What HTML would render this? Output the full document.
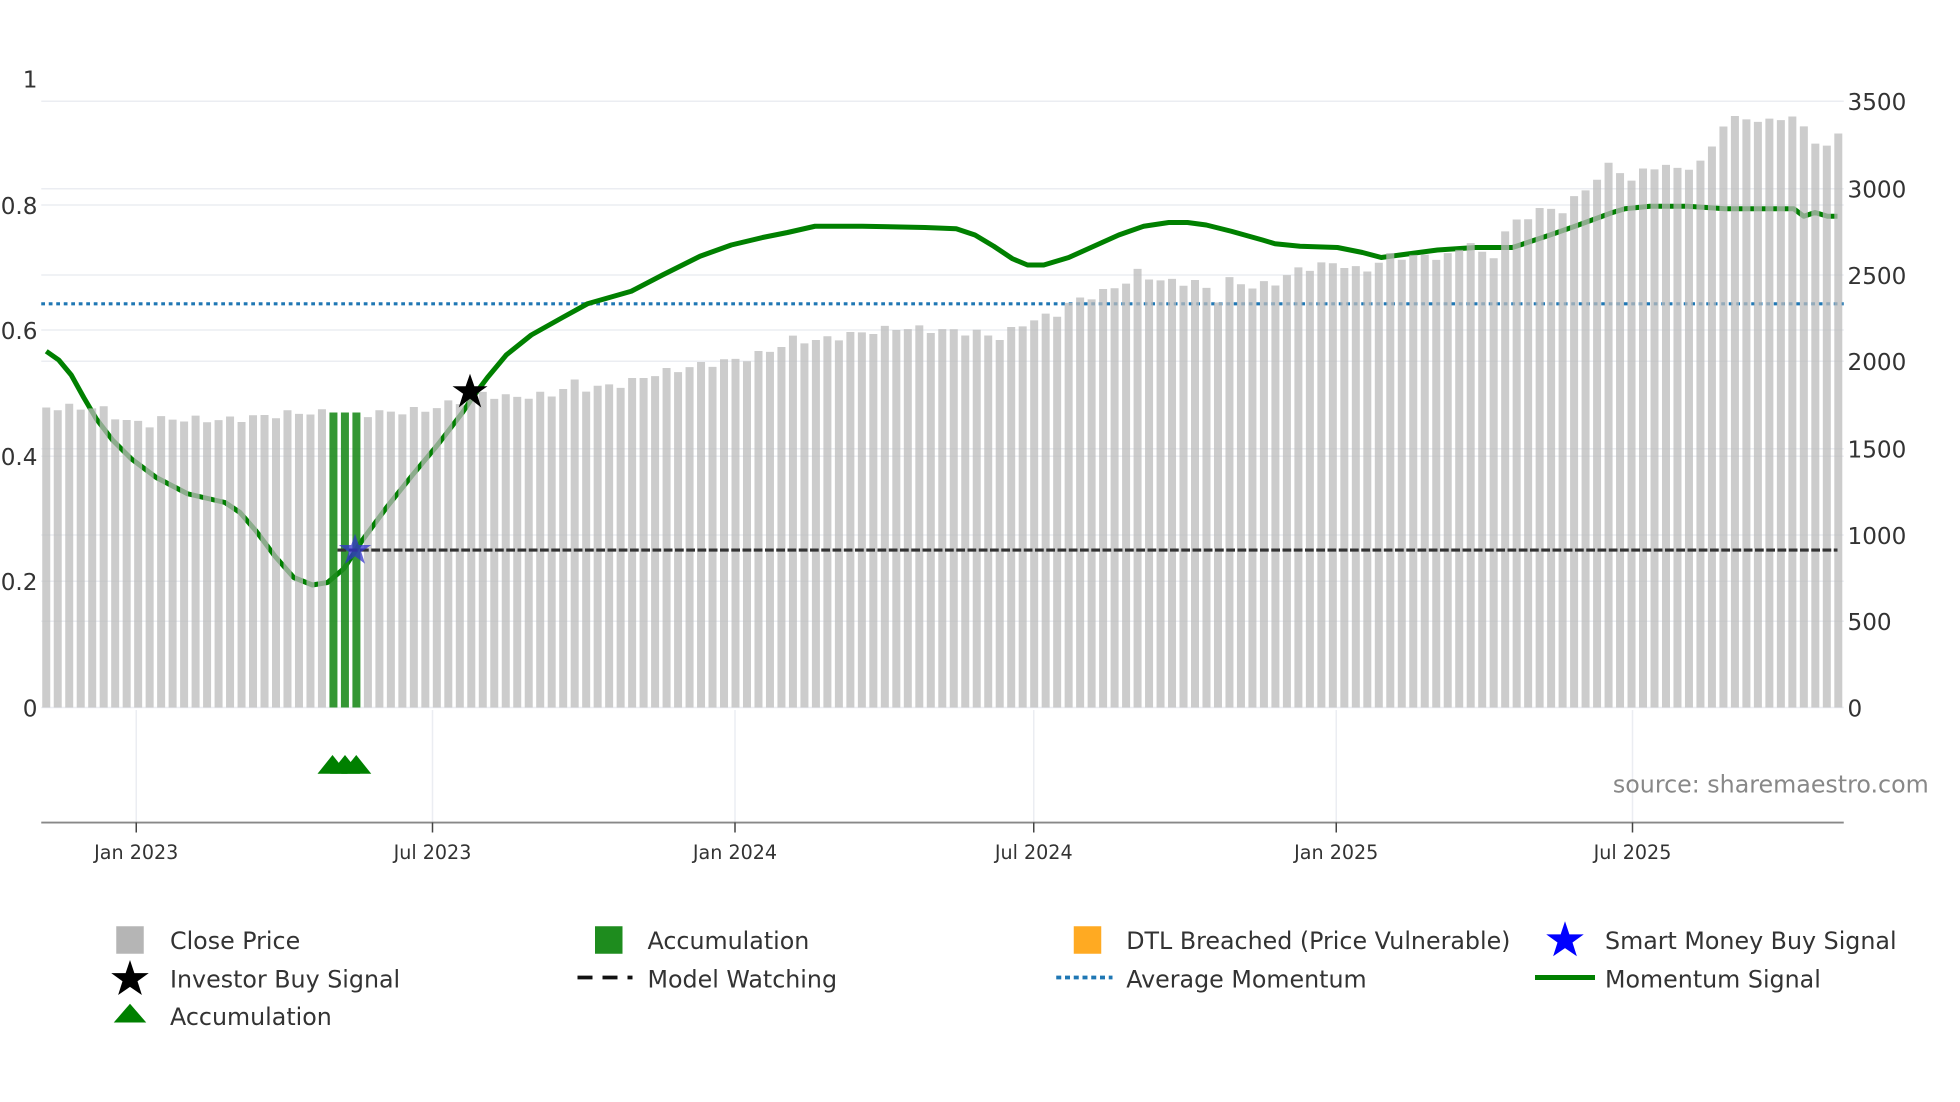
<!DOCTYPE html>
<html><head><meta charset="utf-8"><style>
html,body{margin:0;padding:0;background:#fff;width:1960px;height:1102px;overflow:hidden}
svg{display:block}
text{font-family:"DejaVu Sans","Liberation Sans",sans-serif}
</style></head><body>
<svg id="s" width="1960" height="1102" viewBox="0 0 1568 881.6" xmlns="http://www.w3.org/2000/svg">
<g stroke="#ebedf2" stroke-width="1.2">
<line x1="33" x2="1475" y1="81" y2="81"/><line x1="33" x2="1475" y1="151" y2="151"/><line x1="33" x2="1475" y1="164" y2="164"/>
<line x1="33" x2="1475" y1="220" y2="220"/><line x1="33" x2="1475" y1="264" y2="264"/><line x1="33" x2="1475" y1="289" y2="289"/>
<line x1="33" x2="1475" y1="359" y2="359"/><line x1="33" x2="1475" y1="365" y2="365"/><line x1="33" x2="1475" y1="428" y2="428"/>
<line x1="33" x2="1475" y1="465" y2="465"/><line x1="33" x2="1475" y1="497" y2="497"/><line x1="33" x2="1475" y1="566" y2="566"/>
<line x1="109" x2="109" y1="568" y2="658"/><line x1="346" x2="346" y1="568" y2="658"/><line x1="588" x2="588" y1="568" y2="658"/>
<line x1="827" x2="827" y1="568" y2="658"/><line x1="1069" x2="1069" y1="568" y2="658"/><line x1="1306" x2="1306" y1="568" y2="658"/>
</g>
<line x1="33" x2="1475" y1="243" y2="243" stroke="#1f77b4" stroke-width="2.5" stroke-dasharray="3,3"/>
<polyline id="mom" fill="none" stroke="#008000" stroke-width="4" stroke-linejoin="round" points="37,281 47,288 57,300 67,318 77,335 90,352 105,367 125,382 150,395 180,402 192,410 205,425 220,445 235,462 250,468 262,466 275,455 290,432 310,405 330,380 350,356 370,330 378,318 390,302 405,284 425,268 450,254 470,243 505,233 530,220 560,205 585,196 610,190 630,186 652,181 690,181 740,182 765,183 780,188 795,197 810,207 822,212 835,212 855,206 875,197 895,188 915,181 935,178 950,178 965,180 985,185 1010,192 1020,195 1040,197 1070,198 1090,202 1105,206 1120,204 1150,200 1180,198 1210,198 1240,188 1260,181 1290,170 1300,167 1320,165 1350,165 1380,167 1435,167 1443,173 1452,170 1462,173 1470,173"/>
<g id="bars"></g>
<line x1="270" x2="1470" y1="440" y2="440" stroke="#333" stroke-width="2.5" stroke-dasharray="7,2"/>
<polygon points="376,299 379.5,309 390,309 381.5,315 385,326 376,319 367,326 370.5,315 362,309 372.5,309" fill="#000"/>
<polygon points="284,427 287,436 297,436 289,441.5 292,451 284,445 276,451 279,441.5 271,436 281,436" fill="#3333cc" opacity="0.75"/>
<g fill="#008000"><polygon points="254,619 266,604 278,619"/><polygon points="264,619 276,604 288,619"/><polygon points="273,619 285,604 297,619"/></g>
<line x1="33" x2="1475" y1="658" y2="658" stroke="#888" stroke-width="1.5"/>
<g stroke="#444" stroke-width="1.2"><line x1="109" x2="109" y1="658" y2="666"/><line x1="346" x2="346" y1="658" y2="666"/><line x1="588" x2="588" y1="658" y2="666"/><line x1="827" x2="827" y1="658" y2="666"/><line x1="1069" x2="1069" y1="658" y2="666"/><line x1="1306" x2="1306" y1="658" y2="666"/></g>
<g font-size="15.3" fill="#333" text-anchor="middle">
<text x="109" y="687">Jan 2023</text><text x="346" y="687">Jul 2023</text><text x="588" y="687">Jan 2024</text>
<text x="827" y="687">Jul 2024</text><text x="1069" y="687">Jan 2025</text><text x="1306" y="687">Jul 2025</text></g>
<g font-size="18.5" fill="#333" text-anchor="end">
<text x="30" y="70">1</text><text x="30" y="171">0.8</text><text x="30" y="271">0.6</text><text x="30" y="372">0.4</text><text x="30" y="472">0.2</text><text x="30" y="573">0</text></g>
<g font-size="18.5" fill="#333">
<text x="1478" y="88">3500</text><text x="1478" y="158">3000</text><text x="1478" y="227">2500</text><text x="1478" y="296">2000</text>
<text x="1478" y="366">1500</text><text x="1478" y="435">1000</text><text x="1478" y="504">500</text><text x="1478" y="573">0</text></g>
<text x="1543" y="634" font-size="19" fill="#888" text-anchor="end">source: sharemaestro.com</text>
<g font-size="19" fill="#333">
<rect x="93" y="741" width="22" height="22" fill="#b5b5b5"/><text x="136" y="759">Close Price</text>
<rect x="476" y="741" width="22" height="22" fill="#1e8c1e"/><text x="518" y="759">Accumulation</text>
<rect x="859" y="741" width="22" height="22" fill="#ffaa22"/><text x="901" y="759">DTL Breached (Price Vulnerable)</text>
<polygon points="1252,737 1255.5,747.5 1267,747.5 1258,754 1261.5,765 1252,758.5 1242.5,765 1246,754 1237,747.5 1248.5,747.5" fill="#0000ff"/><text x="1284" y="759">Smart Money Buy Signal</text>
<polygon points="104,768 107.5,778.5 119,778.5 110,785 113.5,796 104,789.5 94.5,796 98,785 89,778.5 100.5,778.5" fill="#000"/><text x="136" y="790">Investor Buy Signal</text>
<line x1="462" x2="506" y1="782" y2="782" stroke="#111" stroke-width="3" stroke-dasharray="12,8"/><text x="518" y="790">Model Watching</text>
<line x1="845" x2="890" y1="782" y2="782" stroke="#1f77b4" stroke-width="3" stroke-dasharray="4,3"/><text x="901" y="790">Average Momentum</text>
<line x1="1228" x2="1276" y1="782" y2="782" stroke="#008000" stroke-width="4"/><text x="1284" y="790">Momentum Signal</text>
<polygon points="91,818 104,803 117,818" fill="#008000"/><text x="136" y="820">Accumulation</text>
</g>
</svg>
<script>
var k=[[37,326],[80,326],[100,337],[120,339],[130,335],[180,336],[240,330],[290,331],[340,328],[370,320],[390,314],[400,318],[440,316],[460,306],[470,311],[500,307],[520,300],[560,292],[600,286],[620,279],[635,271],[650,273],[690,266],[720,262],[780,266],[800,270],[820,258],[845,251],[860,240],[880,235],[900,226],[910,218],[930,225],[960,226],[975,240],[985,222],[1000,230],[1020,226],[1040,215],[1070,210],[1090,218],[1110,205],[1160,205],[1180,190],[1190,215],[1205,183],[1230,168],[1250,168],[1270,150],[1290,130],[1305,145],[1320,132],[1340,135],[1360,132],[1380,98],[1400,92],[1410,102],[1420,92],[1440,97],[1450,110],[1460,122],[1470,105]];
function f(x){for(var i=0;i<k.length-1;i++){if(x<=k[i+1][0]){var t=(x-k[i][0])/(k[i+1][0]-k[i][0]);return k[i][1]+t*(k[i+1][1]-k[i][1]);}}return k[k.length-1][1];}
var g=document.getElementById('bars'),h='';
for(var i=0;i<157;i++){var x=37+i*9.19;var y=f(x)+(Math.sin(i*2.3)*3);var acc=(Math.abs(x-266)<4.5||Math.abs(x-276)<4.5||Math.abs(x-285)<4.5);
if(acc)h+='<rect x="'+(x-3.2)+'" y="330" width="6.4" height="236" fill="#1e8c1e" opacity="0.9"/>';
else h+='<rect x="'+(x-3.2)+'" y="'+y.toFixed(1)+'" width="6.4" height="'+(566-y).toFixed(1)+'" fill="#bbb" opacity="0.75"/>';}
g.innerHTML=h;
</script>
</body></html>
